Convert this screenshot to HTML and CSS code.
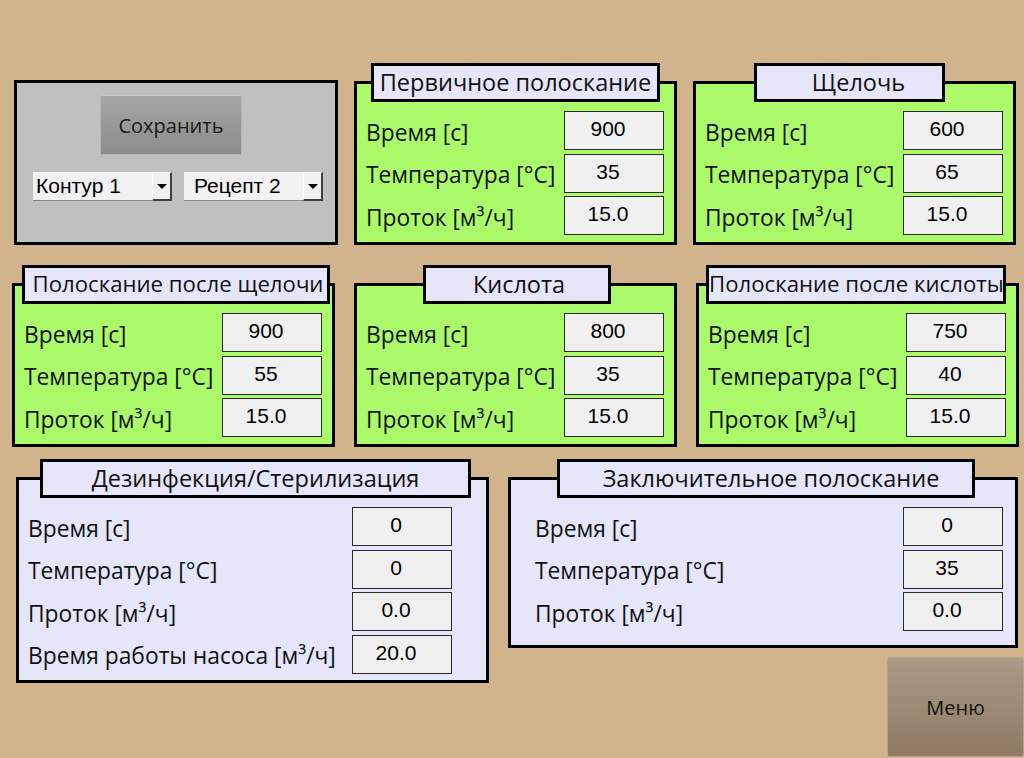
FILE: index.html
```html
<!DOCTYPE html>
<html lang="ru">
<head>
<meta charset="utf-8">
<title>Рецепты мойки</title>
<link rel="stylesheet" href="styles.css">
</head>
<body>
<div class="screen">
  <div class="row row-1">
    <div class="control">
      <button class="save-btn">Сохранить</button>
      <div class="selects">
        <div class="select sel-contour"><span class="sel-text">Контур 1</span><span class="sel-arrow"></span></div>
        <div class="select sel-recipe"><span class="sel-text">Рецепт 2</span><span class="sel-arrow"></span></div>
      </div>
    </div>
    <section class="group">
      <div class="title t-primary">Первичное полоскание</div>
      <div class="box green">
        <div class="field"><span class="label">Время [с]</span><span class="value">900</span></div>
        <div class="field"><span class="label">Температура [°C]</span><span class="value">35</span></div>
        <div class="field"><span class="label">Проток [м³/ч]</span><span class="value">15.0</span></div>
      </div>
    </section>
    <section class="group">
      <div class="title t-alkali">Щелочь</div>
      <div class="box green">
        <div class="field"><span class="label">Время [с]</span><span class="value">600</span></div>
        <div class="field"><span class="label">Температура [°C]</span><span class="value">65</span></div>
        <div class="field"><span class="label">Проток [м³/ч]</span><span class="value">15.0</span></div>
      </div>
    </section>
  </div>

  <div class="row row-2">
    <section class="group">
      <div class="title t-after-alkali">Полоскание после щелочи</div>
      <div class="box green">
        <div class="field"><span class="label">Время [с]</span><span class="value">900</span></div>
        <div class="field"><span class="label">Температура [°C]</span><span class="value">55</span></div>
        <div class="field"><span class="label">Проток [м³/ч]</span><span class="value">15.0</span></div>
      </div>
    </section>
    <section class="group">
      <div class="title t-acid">Кислота</div>
      <div class="box green">
        <div class="field"><span class="label">Время [с]</span><span class="value">800</span></div>
        <div class="field"><span class="label">Температура [°C]</span><span class="value">35</span></div>
        <div class="field"><span class="label">Проток [м³/ч]</span><span class="value">15.0</span></div>
      </div>
    </section>
    <section class="group">
      <div class="title t-after-acid">Полоскание после кислоты</div>
      <div class="box green">
        <div class="field"><span class="label">Время [с]</span><span class="value">750</span></div>
        <div class="field"><span class="label">Температура [°C]</span><span class="value">40</span></div>
        <div class="field"><span class="label">Проток [м³/ч]</span><span class="value">15.0</span></div>
      </div>
    </section>
  </div>

  <div class="row row-3">
    <section class="group g-disinfect">
      <div class="title t-disinfect">Дезинфекция/Стерилизация</div>
      <div class="box lavender box-disinfect">
        <div class="field"><span class="label">Время [с]</span><span class="value">0</span></div>
        <div class="field"><span class="label">Температура [°C]</span><span class="value">0</span></div>
        <div class="field"><span class="label">Проток [м³/ч]</span><span class="value">0.0</span></div>
        <div class="field"><span class="label">Время работы насоса [м³/ч]</span><span class="value">20.0</span></div>
      </div>
    </section>
    <div class="col-final">
      <section class="group g-final">
        <div class="title t-final">Заключительное полоскание</div>
        <div class="box lavender box-final">
          <div class="field"><span class="label">Время [с]</span><span class="value">0</span></div>
          <div class="field"><span class="label">Температура [°C]</span><span class="value">35</span></div>
          <div class="field"><span class="label">Проток [м³/ч]</span><span class="value">0.0</span></div>
        </div>
      </section>
      <button class="menu-btn">Меню</button>
    </div>
  </div>
</div>
</body>
</html>
```

FILE: styles.css
```css
* { box-sizing: border-box; }

html, body {
  margin: 0;
  padding: 0;
}

body {
  width: 1024px;
  height: 758px;
  overflow: hidden;
  background: #d2b48c;
  font-family: "Open Sans", "Noto Sans", sans-serif;
  color: #111;
}

.screen {
  padding-top: 63px;
}

.row {
  display: flex;
  align-items: flex-start;
}

.row-1 {
  padding-left: 14px;
  gap: 16px;
}

.row-2 {
  padding-left: 12px;
  gap: 19px;
  margin-top: 20px;
}

.row-3 {
  padding-left: 16px;
  gap: 19px;
  margin-top: 12px;
}

/* ---------- control panel ---------- */
.control {
  width: 324px;
  height: 165px;
  margin-top: 17px;
  background: #c0c0c0;
  border: 3px solid #000;
  padding: 12px 0 0 16px;
}

.save-btn {
  display: block;
  margin-left: 67px;
  width: 142px;
  height: 60px;
  border: 1px solid #b4b4b4;
  border-top-color: #c8c8c8;
  background: linear-gradient(#a6a6a6, #8b8b8b);
  font-family: "Open Sans", "Noto Sans", sans-serif;
  font-size: 20px;
  color: #1a1a1a;
  padding: 0;
}

.selects {
  display: flex;
  gap: 12px;
  margin-top: 17px;
}

.select {
  display: flex;
  width: 139px;
  height: 29px;
  background: #f2f2f2;
  border-bottom: 1px solid #8a8a8a;
}

.sel-text {
  flex: 1;
  font-family: "Liberation Sans", Arial, sans-serif;
  font-size: 21px;
  line-height: 28px;
  color: #000;
  padding-left: 3px;
  white-space: nowrap;
}

.sel-recipe .sel-text {
  padding-left: 10px;
}

.sel-arrow {
  width: 20px;
  height: 29px;
  background: #f0f0f0;
  border-top: 1px solid #fff;
  border-left: 1px solid #fff;
  border-right: 2px solid #404040;
  border-bottom: 2px solid #404040;
  display: flex;
  align-items: center;
  justify-content: center;
}

.sel-arrow::after {
  content: "";
  width: 0;
  height: 0;
  border-left: 5px solid transparent;
  border-right: 5px solid transparent;
  border-top: 5px solid #000;
}

/* ---------- groups ---------- */
.group {
  display: flex;
  flex-direction: column;
  width: 323px;
}

.title {
  position: relative;
  z-index: 1;
  height: 39px;
  background: #e6e6fa;
  border: 3px solid #000;
  font-size: 23.5px;
  line-height: 32px;
  text-align: center;
  white-space: nowrap;
  color: #111;
}

.t-primary { margin-left: 17px; width: 289px; }
.t-alkali { margin-left: 61px; width: 191px; padding-left: 18px; }
.t-after-alkali { margin-left: 10px; width: 308px; font-size: 22.2px; padding-left: 4px; }
.t-acid { margin-left: 69px; width: 188px; padding-left: 4px; }
.t-after-acid { margin-left: 10px; width: 300px; font-size: 22.2px; }
.t-disinfect { margin-left: 24px; width: 431px; }
.t-final { margin-left: 49px; width: 418px; padding-left: 10px; }

.box {
  margin-top: -21px;
  height: 164px;
  border: 3px solid #000;
  padding: 27px 10px 0 9px;
  display: flex;
  flex-direction: column;
  gap: 3.5px;
}

.green { background: #aafa6a; }
.lavender { background: #e6e6fa; }

.field {
  display: flex;
  align-items: center;
  height: 39px;
}

.label {
  flex: 1;
  font-size: 22.8px;
  line-height: 30px;
  white-space: nowrap;
  padding-top: 4px;
  color: #111;
}

.value {
  width: 100px;
  height: 39px;
  background: #f0f0f0;
  border: 1px solid #2a2a2a;
  font-family: "Liberation Sans", Arial, sans-serif;
  font-size: 21px;
  line-height: 33px;
  text-align: center;
  padding-right: 12px;
  color: #000;
}

/* ---------- bottom row ---------- */
.g-disinfect { width: 473px; }

.box-disinfect {
  height: 206px;
  padding-right: 34px;
  gap: 3.5px;
}

.col-final {
  display: flex;
  flex-direction: column;
  width: 510px;
}

.g-final { width: 510px; }

.box-final {
  height: 171px;
  padding-left: 24px;
  padding-right: 12px;
  gap: 3.5px;
}

.menu-btn {
  align-self: flex-end;
  margin-right: -6px;
  margin-top: 9px;
  width: 137px;
  height: 100px;
  border: 1px solid #b3a590;
  border-radius: 3px;
  background: linear-gradient(#a99a86, #8f7b64);
  font-family: "Open Sans", "Noto Sans", sans-serif;
  font-size: 20px;
  color: #111;
  padding: 0;
}
```
